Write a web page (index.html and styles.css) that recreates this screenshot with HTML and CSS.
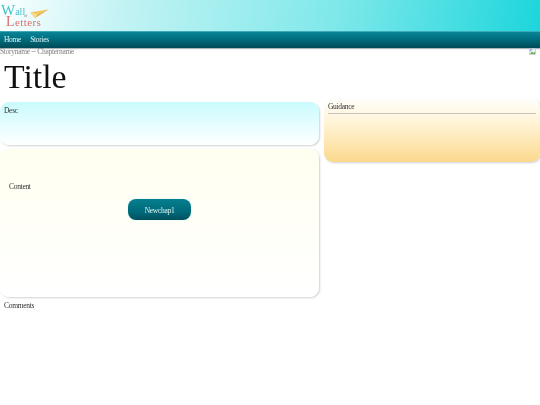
FILE: index.html
```html
<!DOCTYPE html>
<html lang="en">
<head>
<meta charset="utf-8">
<title>Wall of Letters</title>
<link rel="stylesheet" href="styles.css">
</head>
<body>
<header class="banner">
  <a class="logo" href="#">
    <span class="logo-wall"><span class="logo-cap">W</span>all</span>
    <span class="logo-of">of</span>
    <span class="logo-letters"><span class="logo-cap">L</span>etters</span>
    <svg class="logo-plane" viewBox="0 0 20 10" aria-hidden="true">
      <path d="M0 3.5 L20 0 L8 5.5 Z" fill="#f6c65a"/>
      <path d="M8 5.5 L20 0 L5 9.5 Z" fill="#e9a83e"/>
      <path d="M0 3.5 L8 5.5 L5 9.5 Z" fill="#f8d98a"/>
    </svg>
  </a>
</header>
<nav class="nav">
  <a href="#">Home</a>
  <a href="#">Stories</a>
</nav>
<div class="crumb">
  <span>Storyname -- Chaptername</span>
  <svg class="broken" viewBox="0 0 7 7" aria-hidden="true">
    <rect x="0.5" y="0.5" width="6" height="6" fill="#eef2f5" stroke="#b5b9bd" stroke-width="0.6"/>
    <path d="M1 6 L3 3.6 L4.4 5 L6 3.6 V6 Z" fill="#6fae5a"/>
    <path d="M1 1 H4 L1 3.4 Z" fill="#8ab4e8"/>
  </svg>
</div>
<h1 class="title">Title</h1>
<main class="columns">
  <div class="primary">
    <section class="panel desc">Desc</section>
    <section class="panel content">
      <p class="content-text">Content</p>
      <div class="actions"><a class="btn" href="#">Newchap1</a></div>
    </section>
    <div class="comments">Comments</div>
  </div>
  <aside class="panel guidance">
    <div class="guidance-head">Guidance</div>
  </aside>
</main>
</body>
</html>
```
FILE: styles.css
```css
* { box-sizing: border-box; }
html, body { margin: 0; padding: 0; }
html { background: #fff; overflow: hidden; }
body {
  height: 405px;
  background: #fff;
  color: #333;
  font-family: "Liberation Serif", "Times New Roman", serif;
  font-size: 7.5px;
  letter-spacing: -0.3px;
  filter: blur(0.35px);
}
a { color: inherit; text-decoration: none; }

.banner {
  height: 31px;
  background: linear-gradient(100deg, #fbffff 0%, #c4f3f4 22%, #7fe8ea 62%, #1cd6dc 100%);
}
.logo {
  position: relative;
  display: block;
  width: 52px;
  height: 31px;
}
.logo-wall, .logo-of, .logo-letters, .logo-plane { position: absolute; line-height: 1; white-space: nowrap; }
.logo-wall { left: 1px; top: 3px; font-size: 10px; letter-spacing: 0; color: #45c1cc; }
.logo-wall .logo-cap { font-size: 15px; }
.logo-of { left: 24px; top: 14px; font-size: 4px; letter-spacing: 0; color: #777; }
.logo-letters { left: 6px; top: 15px; font-size: 11px; letter-spacing: 0.4px; color: #d9706e; }
.logo-letters .logo-cap { font-size: 14px; }
.logo-plane { left: 30px; top: 9px; width: 19px; height: 10px; }

.nav {
  height: 17px;
  display: flex;
  align-items: center;
  gap: 9px;
  padding: 0 4px 2px;
  background: linear-gradient(#0a8496, #007183 40%, #004a57);
  border-top: 1px solid #3ea9b6;
  box-shadow: 0 1px 1px #a9b6b9;
  color: #e4f6f7;
}

.crumb {
  height: 7px;
  display: flex;
  justify-content: space-between;
  padding-right: 4px;
  color: #808080;
  line-height: 7px;
  white-space: nowrap;
}
.broken { width: 7px; height: 7px; }

.title {
  margin: 0;
  height: 44px;
  padding: 5px 0 0 4px;
  font-size: 33.75px;
  font-weight: 400;
  letter-spacing: 0;
  line-height: 34px;
  color: #111;
}

.columns {
  display: flex;
  align-items: flex-start;
  gap: 5px;
}
.primary { flex: 0 0 319px; display: flex; flex-direction: column; margin-top: 3px; }
.panel {
  border-radius: 9px;
  box-shadow: 1px 1px 2px rgba(120, 120, 120, 0.35);
}
.desc {
  height: 43px;
  padding: 4px;
  background: linear-gradient(#c9fbfd, #ffffff);
  line-height: 10px;
}
.content {
  height: 148px;
  margin-top: 4px;
  padding: 33px 9px 0;
  background: linear-gradient(#fffff0, #ffffff);
}
.content-text { margin: 0; line-height: 10px; }
.actions { display: flex; justify-content: center; margin-top: 7px; }
.btn {
  width: 63px;
  height: 21px;
  display: flex;
  align-items: center;
  justify-content: center;
  padding-top: 2px;
  border-radius: 8px;
  background: linear-gradient(#057f90, #006a7a 60%, #00505e);
  box-shadow: 0 0 1px #7fe8ea;
  color: #dff4f5;
}
.comments { margin-top: 4px; padding-left: 4px; line-height: 9px; }
.guidance {
  flex: 0 0 216px;
  height: 63px;
  padding: 3px 4px 0;
  background: linear-gradient(#fffefb, #fff3d4 40%, #fbd98d);
}
.guidance-head {
  height: 12px;
  border-bottom: 1px solid #c9c4b8;
  line-height: 10px;
}
```
